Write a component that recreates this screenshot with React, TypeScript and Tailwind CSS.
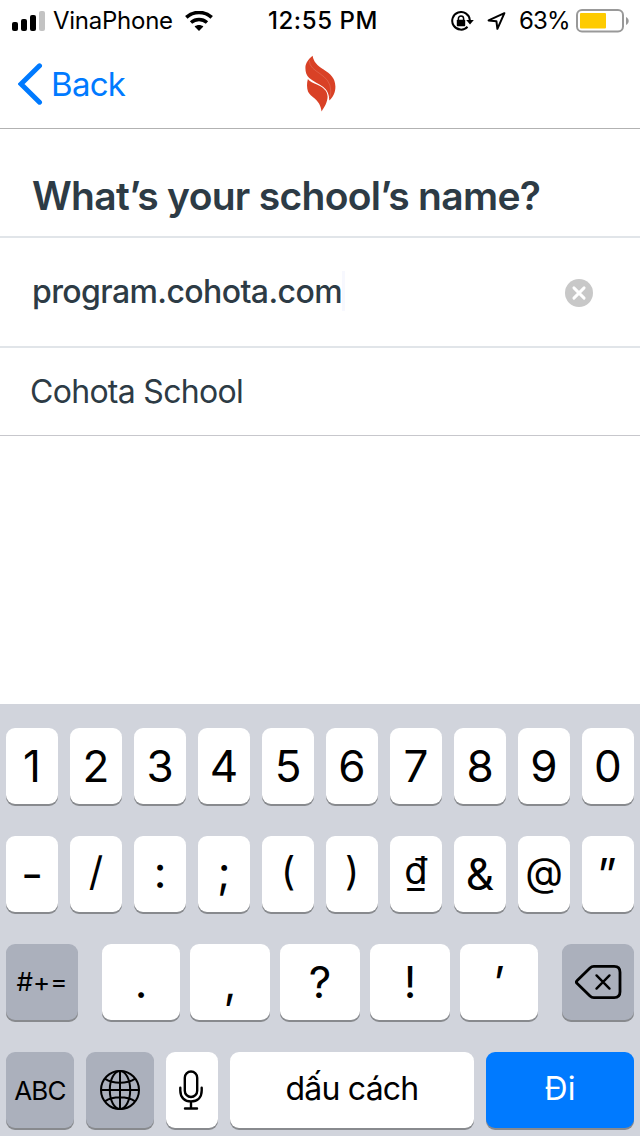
import type { ReactNode } from "react";
import clsx from "clsx";

const DIGITS = ["1", "2", "3", "4", "5", "6", "7", "8", "9", "0"];
const SYMBOLS = [
  { char: "-", style: "scale-x-110" },
  { char: "/", style: "pb-1 text-[40px]" },
  { char: ":", style: "pb-1" },
  { char: ";", style: "pb-1" },
  { char: "(", style: "pb-2 text-[39px]" },
  { char: ")", style: "pb-2 text-[39px]" },
  { char: "₫", style: "pb-2 text-[38px]" },
  { char: "&", style: "" },
  { char: "@", style: "pb-1.5 text-[39px]" },
  { char: "”", style: "pr-0.5" },
];

function SignalIcon() {
  return (
    <svg width="34" height="20" viewBox="0 0 34 20" className="shrink-0">
      <rect x="0" y="11" width="6" height="9" rx="2" />
      <rect x="9" y="8" width="6" height="12" rx="2" />
      <rect x="18" y="4" width="6" height="16" rx="2" />
      <rect x="27" y="0" width="6" height="20" rx="2" fill="#c3c3c3" />
    </svg>
  );
}

function WifiIcon() {
  return (
    <svg width="28" height="20" viewBox="0 0 28 20" className="shrink-0" fill="none" stroke="#000">
      <path d="M1.3 6.4C8.6-.2 19.4-.2 26.7 6.4" strokeWidth="3.6" />
      <path d="M6 11.5C10.7 7.5 17.3 7.5 22 11.5" strokeWidth="3.5" />
      <path d="M9.6 15.4C12.2 13.4 15.8 13.4 18.4 15.4L14 20Z" fill="#000" stroke="none" />
    </svg>
  );
}

function RotationLockIcon() {
  return (
    <svg width="23" height="20" viewBox="0 0 23 20" className="shrink-0" fill="none" stroke="#000">
      <path d="M16.5 15.8A8.8 8.8 0 1 1 18.8 9" strokeWidth="2" />
      <path d="M15.2 9H22.8L19 13.6Z" fill="#000" stroke="none" />
      <rect x="5.8" y="8.7" width="8.4" height="6.6" rx="0.8" fill="#000" stroke="none" />
      <path d="M7.4 9V7.5A2.6 2.6 0 0 1 12.6 7.5V9" strokeWidth="1.5" />
    </svg>
  );
}

function LocationIcon() {
  return (
    <svg width="19" height="18" viewBox="0 0 19 18" className="shrink-0" fill="none" stroke="#000" strokeWidth="2" strokeLinejoin="round">
      <path d="M17.4 1.2L1.6 8.4L9.4 9.2L10.4 16.8Z" />
    </svg>
  );
}

function BatteryIcon() {
  return (
    <svg width="53" height="24" viewBox="0 0 53 24" className="shrink-0">
      <rect x="1" y="1" width="46" height="21.5" rx="5" fill="none" stroke="#999" strokeWidth="2" />
      <rect x="4" y="4" width="26" height="15.5" rx="1" fill="#fecb00" />
      <path d="M50 8C53.6 9.4 53.6 14.6 50 16Z" fill="#999" />
    </svg>
  );
}

function FlameLogo() {
  return (
    <svg width="31" height="57" viewBox="0 0 31 57" fill="#d94126" className="-mt-px">
      <path d="M7.6 .8C3.6 4 .4 8 .4 13C.4 17.5 1.6 20.6 4.2 23C8 26.4 13.6 28.4 18 31.8C22.6 35.4 24.2 39.6 24.3 45.6C28 42 30.5 37.6 30.4 31.5C30.2 22.8 25.4 19 18.6 14.5C12 10.4 8.6 6.8 7.6 .8Z" />
      <path d="M2.9 24C1.6 28 1.8 33.2 3 36.4C5.6 42.6 15.2 43.6 16.6 56.4C19.8 52 22.6 46.6 22.6 41.6C22.4 35.6 18 32.4 12.4 29.8C8.4 28 4.6 26.6 2.9 24Z" />
      <path d="M4.3 5.6C4.2 18 25.8 18 25.8 36C25.8 38 25.4 40.4 24.8 42" fill="none" stroke="#e98f80" strokeWidth="0.35" />
    </svg>
  );
}

function ClearIcon() {
  return (
    <svg width="28" height="28" viewBox="0 0 28 28">
      <circle cx="14" cy="14" r="14" fill="#c8c8c8" />
      <path d="M8.9 8.9L19.1 19.1M19.1 8.9L8.9 19.1" stroke="#fff" strokeWidth="2.9" strokeLinecap="round" />
    </svg>
  );
}

function GlobeIcon() {
  return (
    <svg width="40" height="40" viewBox="0 0 40 40" fill="none" stroke="#000" strokeWidth="2">
      <circle cx="20" cy="20" r="19" />
      <ellipse cx="20" cy="20" rx="10.2" ry="19" />
      <path d="M20 1V39M1 20H39M5.2 8.8C13 14 27 14 34.8 8.8M5.2 31.2C13 26 27 26 34.8 31.2" />
    </svg>
  );
}

function MicIcon() {
  return (
    <svg width="24" height="40" viewBox="0 0 24 40" fill="none" stroke="#000" strokeWidth="2.4" strokeLinecap="round">
      <rect x="5.8" y="1.5" width="12.4" height="25.5" rx="6.2" />
      <path d="M1.3 17.8V20.5C1.3 27.4 5.6 31.4 12 31.4S22.7 27.4 22.7 20.5V17.8M12 31.4V38.5M6 38.5H18" />
    </svg>
  );
}

function DeleteIcon() {
  return (
    <svg width="47" height="34" viewBox="0 0 47 34" fill="none" stroke="#000" strokeWidth="2.8" strokeLinecap="round" strokeLinejoin="round">
      <path d="M18.8 1.4H39.2Q45 1.4 45 7.2V26.8Q45 32.6 39.2 32.6H18.8Q16.6 32.6 15 31L2.2 18.6Q.6 17 2.2 15.4L15 3Q16.6 1.4 18.8 1.4Z" />
      <path d="M21.5 10.4L34.5 23.6M34.5 10.4L21.5 23.6" strokeWidth="2.4" />
    </svg>
  );
}

function Key({ children, className, tone = "light" }: { children: ReactNode; className?: string; tone?: "light" | "dark" | "blue" }) {
  return (
    <button
      type="button"
      className={clsx(
        "flex h-[76px] shrink-0 items-center justify-center rounded-[9px] shadow-[0_2px_0_#888a8e]",
        tone === "light" && "bg-white text-black",
        tone === "dark" && "bg-[#abb0bc] text-black",
        tone === "blue" && "bg-[#007aff] text-white",
        className,
      )}
    >
      {children}
    </button>
  );
}

function StatusBar() {
  return (
    <div className="grid h-10 grid-cols-[246px_154px_1fr] items-center text-[24px] leading-[41px]">
      <div className="flex items-center pl-3">
        <SignalIcon />
        <span className="ml-[7px] w-[132px] tracking-[-0.25px]">VinaPhone</span>
        <WifiIcon />
      </div>
      <span className="text-center font-medium tracking-[0.6px]">12:55 PM</span>
      <div className="flex items-center pl-[51px]">
        <RotationLockIcon />
        <span className="ml-[13px]">
          <LocationIcon />
        </span>
        <span className="ml-[13px] w-[57px] tracking-[-0.8px]">63%</span>
        <BatteryIcon />
      </div>
    </div>
  );
}

export default function App() {
  return (
    <main className="flex h-[1136px] w-[640px] flex-col overflow-hidden bg-white font-['Inter','Liberation_Sans',sans-serif] text-black">
      <StatusBar />
      <header className="grid h-[89px] grid-cols-[1fr_auto_1fr] items-center border-b border-[#b2b2b2]">
        <button type="button" className="flex items-center pl-[18px] text-[33px] leading-[44px] tracking-[-0.7px] text-[#007aff]">
          <svg width="25" height="42" viewBox="0 0 25 42" fill="none" stroke="#007aff" strokeWidth="5" strokeLinecap="round">
            <path d="M21.5 2.8L3 21L21.5 39.2" strokeLinejoin="miter" />
          </svg>
          <span className="ml-2">Back</span>
        </button>
        <FlameLogo />
      </header>

      <section className="text-[#2d3b45]">
        <h1 className="border-b-2 border-[#e1e5e9] pt-[43px] pb-4 pl-8 text-[39px] leading-[48px] font-semibold tracking-[-0.7px]">What’s your school’s name?</h1>
        <div className="flex h-[110px] items-center border-b-2 border-[#e1e5e9] pl-8">
          <span className="pb-px text-[32px] leading-10 font-medium tracking-[-0.6px]">program.cohota.com</span>
          <span className="mb-0.5 h-10 w-[3px] bg-[#f7f8fe]" />
          <span className="mt-0.5 mr-[47px] ml-auto">
            <ClearIcon />
          </span>
        </div>
        <div className="flex h-[88px] items-center border-b border-[#c7c7cc] pl-[30px] text-[32px] tracking-[-0.7px]">Cohota School</div>
      </section>

      <section className="mt-auto flex h-[432px] flex-col gap-8 bg-[#d1d4dc] px-1.5 pt-6 text-[44px] leading-none">
        <div className="flex gap-3">
          {DIGITS.map((k) => (
            <Key key={k} className="w-[52px]">{k}</Key>
          ))}
        </div>
        <div className="flex gap-3">
          {SYMBOLS.map(({ char, style }) => (
            <Key key={char} className="w-[52px]">
              <span className={style}>{char}</span>
            </Key>
          ))}
        </div>
        <div className="flex justify-between">
          <Key tone="dark" className="w-[72px] text-[26px]">#+=</Key>
          <div className="flex gap-2.5">
            <Key className="w-[78px]">.</Key>
            <Key className="w-20">,</Key>
            <Key className="w-20">?</Key>
            <Key className="w-20">!</Key>
            <Key className="w-[78px]">’</Key>
          </div>
          <Key tone="dark" className="w-[72px]">
            <DeleteIcon />
          </Key>
        </div>
        <div className="flex gap-3">
          <Key tone="dark" className="w-[68px] pt-0.5 text-[26px] tracking-[-0.8px]">ABC</Key>
          <Key tone="dark" className="w-[68px]">
            <GlobeIcon />
          </Key>
          <Key className="w-[52px] pr-0.5">
            <MicIcon />
          </Key>
          <Key className="w-[244px] pb-0.5 text-[32px] tracking-[-0.8px]">dấu cách</Key>
          <Key tone="blue" className="w-[148px] pb-0.5 text-[32px]">Đi</Key>
        </div>
      </section>
    </main>
  );
}
